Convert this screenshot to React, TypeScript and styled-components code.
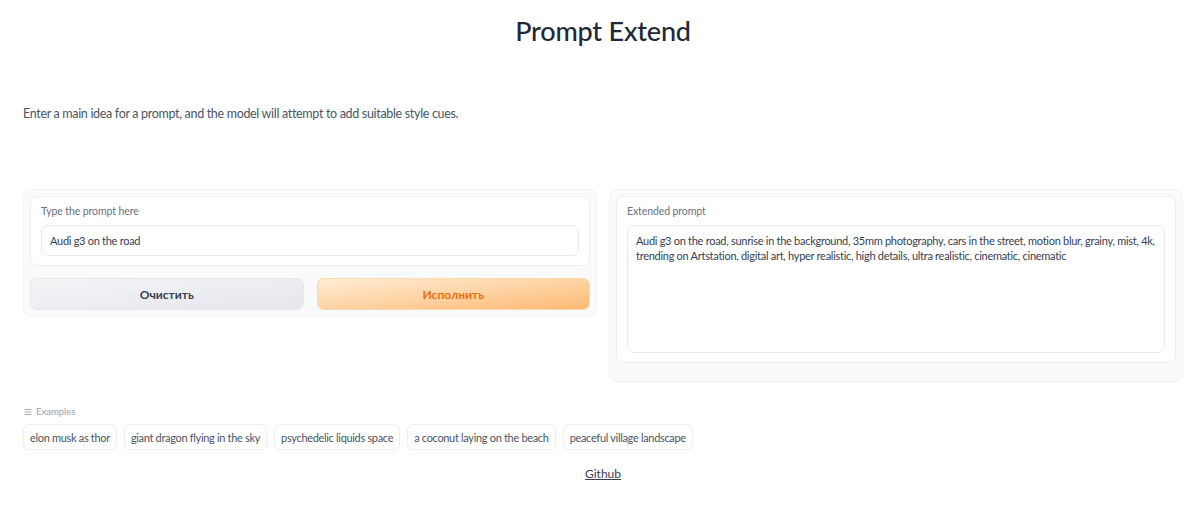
import React from "react";
import styled, { createGlobalStyle } from "styled-components";

const Global = createGlobalStyle`
  html, body { margin: 0; padding: 0; background: #ffffff; }
  body { font-family: "Lato", "Noto Sans", sans-serif; color: #374151; }
  * { box-sizing: border-box; }
`;

const Page = styled.div`
  width: 1160px;
  margin-left: 23px;
  display: flex;
  flex-direction: column;
`;

const Title = styled.h1`
  margin: 14px 0 0 0;
  text-align: center;
  font-size: 27px;
  line-height: 34px;
  font-weight: 500;
  color: #1f2937;
  letter-spacing: -0.2px;
`;

const Description = styled.p`
  margin: 58px 0 0 0;
  font-size: 12.5px;
  line-height: 16px;
  color: #4b5563;
  letter-spacing: -0.32px;
`;

const Row = styled.div`
  margin-top: 67px;
  display: flex;
  gap: 12px;
  align-items: flex-start;
`;

const Panel = styled.div<{ $h: number }>`
  flex: 1;
  height: ${(p) => p.$h}px;
  background: #f9fafb;
  border: 1px solid #f1f3f6;
  border-radius: 8px;
  padding: 6px;
  display: flex;
  flex-direction: column;
  gap: 12px;
`;

const Block = styled.div<{ $h: number }>`
  height: ${(p) => p.$h}px;
  background: #ffffff;
  border: 1px solid #eceef2;
  border-radius: 7px;
  padding: 7px 10px 9px 10px;
  display: flex;
  flex-direction: column;
  gap: 7px;
`;

const Label = styled.span`
  font-size: 10.5px;
  line-height: 14px;
  color: #6b7280;
  letter-spacing: -0.1px;
`;

const Field = styled.div<{ $h: number }>`
  height: ${(p) => p.$h}px;
  border: 1px solid #e8eaee;
  border-radius: 7px;
  background: #ffffff;
  box-shadow: inset 0 1px 2px rgba(0, 0, 0, 0.03);
  padding: 7px 8px;
  font-size: 11px;
  line-height: 15px;
  color: #374151;
  letter-spacing: -0.28px;
`;

const Buttons = styled.div`
  display: flex;
  gap: 13px;
`;

const Button = styled.button<{ $primary?: boolean }>`
  flex: 1;
  height: 32px;
  border-radius: 7px;
  border: 1px solid ${(p) => (p.$primary ? "#fed7aa" : "#e5e7eb")};
  background: ${(p) =>
    p.$primary
      ? "linear-gradient(to bottom right, #ffedd5, #fdba74)"
      : "linear-gradient(to bottom right, #f3f4f6, #e5e7eb)"};
  color: ${(p) => (p.$primary ? "#ea700f" : "#374151")};
  font-family: "Lato", "Noto Sans", sans-serif;
  font-weight: 700;
  font-size: 12px;
  cursor: pointer;
`;

const Examples = styled.div`
  margin-top: 24px;
  display: flex;
  flex-direction: column;
  gap: 6px;
`;

const ExamplesLabel = styled.div`
  display: flex;
  align-items: center;
  gap: 4px;
  font-size: 9.5px;
  line-height: 12px;
  color: #9ca3af;
  padding-left: 1px;
`;

const Chips = styled.div`
  display: flex;
  gap: 7px;
`;

const Chip = styled.button`
  height: 26px;
  padding: 0 6px;
  background: #ffffff;
  border: 1px solid #eceef2;
  border-radius: 6px;
  font-family: "Lato", "Noto Sans", sans-serif;
  font-size: 11px;
  color: #4b5563;
  letter-spacing: -0.32px;
  cursor: pointer;
`;

const Footer = styled.div`
  margin-top: 12px;
  text-align: center;
`;

const Link = styled.a`
  font-size: 12px;
  color: #374151;
  text-decoration: underline;
`;

const examples = [
  "elon musk as thor",
  "giant dragon flying in the sky",
  "psychedelic liquids space",
  "a coconut laying on the beach",
  "peaceful village landscape",
];

export default function App() {
  return (
    <>
      <Global />
      <Page>
        <Title>Prompt Extend</Title>
        <Description>
          Enter a main idea for a prompt, and the model will attempt to add suitable style cues.
        </Description>
        <Row>
          <Panel $h={128}>
            <Block $h={70}>
              <Label>Type the prompt here</Label>
              <Field $h={31}>Audi g3 on the road</Field>
            </Block>
            <Buttons>
              <Button>Очистить</Button>
              <Button $primary>Исполнить</Button>
            </Buttons>
          </Panel>
          <Panel $h={193}>
            <Block $h={167}>
              <Label>Extended prompt</Label>
              <Field $h={128}>
                Audi g3 on the road, sunrise in the background, 35mm photography, cars in the street, motion blur, grainy, mist, 4k, trending on Artstation, digital art, hyper realistic, high details, ultra realistic, cinematic, cinematic
              </Field>
            </Block>
          </Panel>
        </Row>
        <Examples>
          <ExamplesLabel>
            <svg width="8" height="8" viewBox="0 0 8 8" fill="none" stroke="#9ca3af" strokeWidth="0.9">
              <path d="M0.5 1.5H7.5M0.5 4H7.5M0.5 6.5H7.5" />
            </svg>
            Examples
          </ExamplesLabel>
          <Chips>
            {examples.map((e) => (
              <Chip key={e}>{e}</Chip>
            ))}
          </Chips>
        </Examples>
        <Footer>
          <Link href="#">Github</Link>
        </Footer>
      </Page>
    </>
  );
}
